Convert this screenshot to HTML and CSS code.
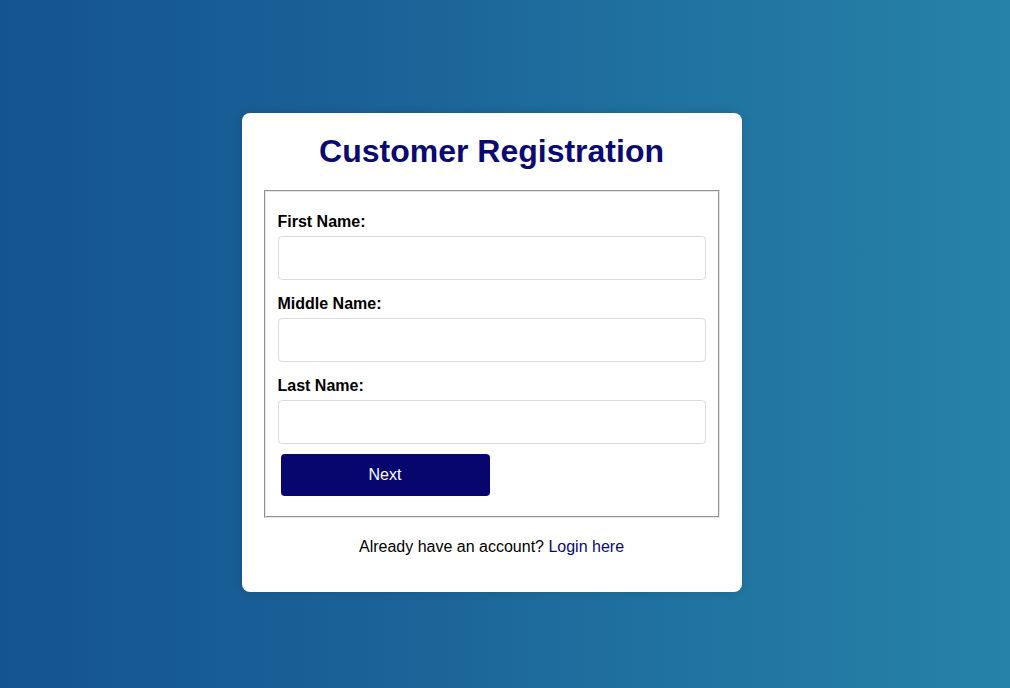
FILE: index.html
```html
<!DOCTYPE html>
<html lang="en">
<head>
<meta charset="utf-8">
<title>Customer Registration</title>
<link rel="stylesheet" href="styles.css">
</head>
<body>
<main class="page">
  <section class="card">
    <h1 class="title">Customer Registration</h1>
    <form class="form">
      <fieldset class="fields">
        <div class="group">
          <label class="label" for="first">First Name:</label>
          <input class="input" id="first" type="text">
        </div>
        <div class="group">
          <label class="label" for="middle">Middle Name:</label>
          <input class="input" id="middle" type="text">
        </div>
        <div class="group">
          <label class="label" for="last">Last Name:</label>
          <input class="input" id="last" type="text">
        </div>
        <button class="btn" type="button">Next</button>
      </fieldset>
    </form>
    <p class="foot">Already have an account? <a class="link" href="#">Login here</a></p>
  </section>
</main>
</body>
</html>
```
FILE: styles.css
```css
html, body {
  margin: 0;
  height: 100%;
}
body {
  font-family: "Liberation Sans", Arial, sans-serif;
  background: linear-gradient(to right, #145490 0%, #1b6398 40%, #1f6f9e 60%, #2682a8 100%);
}
.page {
  box-sizing: border-box;
  height: 100%;
  display: flex;
  align-items: center;
  justify-content: center;
  padding: 16px 27px 0 0;
}
.card {
  box-sizing: border-box;
  width: 500px;
  background: #fff;
  border-radius: 8px;
  padding: 20px 20px 20px;
  box-shadow: 0 0 10px rgba(0, 0, 0, 0.12);
}
.title {
  margin: 0 0 20px;
  text-align: center;
  color: #0a0a70;
  font-size: 32px;
  font-weight: bold;
  line-height: 37px;
}
.form {
  margin: 0;
}
.fields {
  margin: 0 2px;
  padding: 6px 12px 10px;
  border: 2px groove #e6e6e6;
  min-width: 0;
}
.group {
  margin-top: 15px;
}
.label {
  display: block;
  font-weight: bold;
  font-size: 16px;
  line-height: 18px;
  margin-bottom: 5px;
  color: #000;
}
.input {
  display: block;
  box-sizing: border-box;
  width: 100%;
  height: 44px;
  border: 1px solid #dcdcdc;
  border-radius: 4px;
  padding: 10px;
  font-size: 16px;
  font-family: inherit;
}
.btn {
  display: block;
  width: 209px;
  height: 42px;
  margin: 10px 3px 10px;
  border: none;
  border-radius: 4px;
  background: #06066e;
  color: #fff;
  font-family: inherit;
  font-size: 16px;
}
.foot {
  margin: 20px 0 16px;
  text-align: center;
  font-size: 16px;
  line-height: 18px;
  color: #000;
}
.link {
  color: #0a0a70;
  text-decoration: none;
}
```
